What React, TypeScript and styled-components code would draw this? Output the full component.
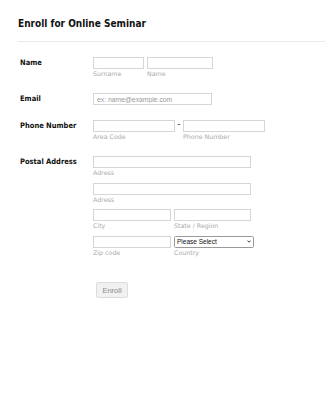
import styled, { createGlobalStyle } from "styled-components";

const Global = createGlobalStyle`
  html, body { margin: 0; padding: 0; background: #fff; }
  body { font-family: "DejaVu Sans", Verdana, sans-serif; color: #111; }
`;

const Page = styled.div`
  width: 325px;
  height: 400px;
  padding: 18px 0 0 18px;
  box-sizing: border-box;
`;

const Title = styled.h1`
  margin: 0;
  font-family: "DejaVu Sans Condensed", "DejaVu Sans", sans-serif;
  font-stretch: condensed;
  font-size: 10px;
  font-weight: bold;
  line-height: 12px;
  color: #111;
`;

const Divider = styled.hr`
  margin: 11px 0 15px 0;
  border: 0;
  border-top: 1px solid #eaeaea;
`;

const Form = styled.form`
  display: flex;
  flex-direction: column;
  padding-left: 2px;
`;

const Row = styled.div<{ $gap?: number }>`
  display: flex;
  align-items: flex-start;
  margin-bottom: ${({ $gap }) => $gap ?? 14}px;
`;

const Label = styled.label`
  width: 73px;
  flex: none;
  font-family: "DejaVu Sans Condensed", "DejaVu Sans", sans-serif;
  font-stretch: condensed;
  font-size: 7.5px;
  font-weight: bold;
  line-height: 12px;
`;

const Fields = styled.div`
  display: flex;
  flex-direction: column;
  gap: 4.5px;
`;

const Line = styled.div<{ $gap?: number }>`
  display: flex;
  align-items: flex-start;
  gap: ${({ $gap }) => $gap ?? 3}px;
`;

const Field = styled.div`
  position: relative;
  display: flex;
  flex-direction: column;
`;

const Input = styled.input<{ $w: number }>`
  width: ${({ $w }) => $w}px;
  height: 12px;
  box-sizing: border-box;
  margin: 0;
  padding: 0 3px;
  border: 1px solid #d6d6d6;
  background: #fff;
  font-family: "Liberation Sans", Arial, sans-serif;
  font-size: 6.8px;
  outline: none;
  &::placeholder { color: #9a9a9a; }
`;

const Select = styled.select`
  appearance: none;
  width: 80px;
  height: 12px;
  box-sizing: border-box;
  margin: 0;
  padding: 0 0 0 2px;
  border: 1px solid #9a9a9a;
  border-radius: 1.5px;
  background: #fff;
  font-family: "Liberation Sans", Arial, sans-serif;
  font-size: 6.5px;
  color: #111;
  outline: none;
`;

const Chevron = styled.svg`
  position: absolute;
  top: 4px;
  left: 73px;
  width: 4px;
  height: 3px;
  pointer-events: none;
`;

const Sub = styled.span`
  font-size: 6.3px;
  line-height: 10px;
  color: #aaa;
`;

const Dash = styled.span`
  width: 8px;
  text-align: center;
  font-size: 8px;
  line-height: 10px;
`;

const ButtonRow = styled.div`
  padding: 6px 0 0 78px;
`;

const Button = styled.button`
  width: 32px;
  height: 16px;
  box-sizing: border-box;
  padding: 0;
  border: 1px solid #dcdcdc;
  border-radius: 2px;
  background: #f1f1f1;
  color: #8a8a8a;
  font-family: "Liberation Sans", Arial, sans-serif;
  font-size: 7.5px;
`;

export default function App() {
  return (
    <Page>
      <Global />
      <Title>Enroll for Online Seminar</Title>
      <Divider />
      <Form onSubmit={(e) => e.preventDefault()}>
        <Row>
          <Label>Name</Label>
          <Line>
            <Field>
              <Input $w={51} />
              <Sub>Surname</Sub>
            </Field>
            <Field>
              <Input $w={66} />
              <Sub>Name</Sub>
            </Field>
          </Line>
        </Row>
        <Row $gap={15}>
          <Label>Email</Label>
          <Input $w={119} placeholder="ex: name@example.com" />
        </Row>
        <Row>
          <Label>Phone Number</Label>
          <Line $gap={0}>
            <Field>
              <Input $w={82} />
              <Sub>Area Code</Sub>
            </Field>
            <Dash>-</Dash>
            <Field>
              <Input $w={82} />
              <Sub>Phone Number</Sub>
            </Field>
          </Line>
        </Row>
        <Row>
          <Label>Postal Address</Label>
          <Fields>
            <Field>
              <Input $w={158} />
              <Sub>Adress</Sub>
            </Field>
            <Field>
              <Input $w={158} />
              <Sub>Adress</Sub>
            </Field>
            <Line>
              <Field>
                <Input $w={78} />
                <Sub>City</Sub>
              </Field>
              <Field>
                <Input $w={77} />
                <Sub>State / Region</Sub>
              </Field>
            </Line>
            <Line>
              <Field>
                <Input $w={78} />
                <Sub>Zip code</Sub>
              </Field>
              <Field>
                <Select defaultValue="">
                  <option value="">Please Select</option>
                </Select>
                <Chevron viewBox="0 0 8 6">
                  <path d="M1 1.2 L4 4.4 L7 1.2" fill="none" stroke="#222" strokeWidth="1.8" />
                </Chevron>
                <Sub>Country</Sub>
              </Field>
            </Line>
          </Fields>
        </Row>
      </Form>
      <ButtonRow>
        <Button type="button">Enroll</Button>
      </ButtonRow>
    </Page>
  );
}
